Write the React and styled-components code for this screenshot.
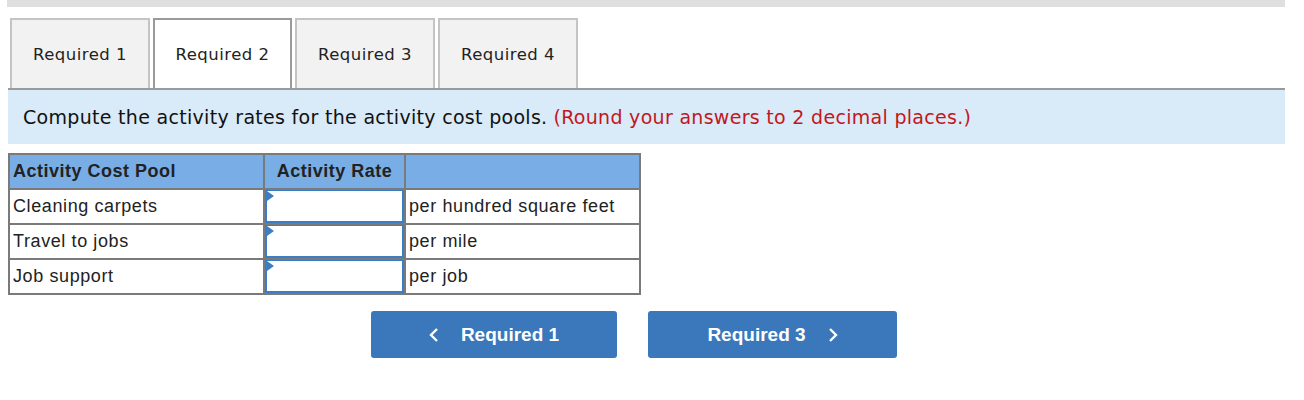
import React, {useState} from 'react'
import styled, {createGlobalStyle} from "styled-components"

const Global=createGlobalStyle`
body {
  margin: 0;
  background: #fff;
}
`
const Page=styled.div`
padding: 0 19px 0 8px;
`
const TopBar=styled.div`
height: 7px;
background-color: #dfdfdf;
margin-left: -1px;
`
const Tabs=styled.div`
display: flex;
gap: 3px;
margin-top: 11px;
padding-left: 2px;
border-bottom: 2px solid #9a9a9a;
`
const Tab=styled.button`
width: ${p=>p.active ? '139px' : '140px'};
height: 70px;
margin-bottom: ${p=>p.active ? '-2px' : '0'};
background-color: ${p=>p.active ? '#ffffff' : '#f2f2f2'};
border: 2px solid ${p=>p.active ? '#9a9a9a' : '#c4c4c4'};
border-bottom: 0;
font-family: "DejaVu Sans", Verdana, sans-serif;
font-size: 16.5px;
letter-spacing: 0.5px;
color: #222;
padding: 0;
cursor: pointer;
`
const Band=styled.div`
background-color: #d9eaf8;
height: 54px;
display: flex;
align-items: center;
padding-left: 15px;
font-family: "DejaVu Sans", Verdana, sans-serif;
font-size: 19px;
letter-spacing: 0.3px;
color: #111;
`
const Note=styled.span`
color: #c3161c;
margin-left: 6px;
`
const Table=styled.table`
margin-top: 9px;
width: 631px;
table-layout: fixed;
border-collapse: collapse;
font-family: "Liberation Sans", Arial, sans-serif;
font-size: 18px;
letter-spacing: 0.6px;
color: #222;
`
const Th=styled.th`
background-color: #78ade5;
border: 2px solid #7a7a7a;
height: 33px;
padding: 0 3px;
font-weight: bold;
letter-spacing: 0.5px;
text-align: ${p=>p.align || 'left'};
`
const Td=styled.td`
border: 2px solid #7a7a7a;
height: 31px;
padding: 0 ${p=>p.input ? '0' : '3px'};
position: relative;
`
const Cell=styled.input`
display: block;
box-sizing: border-box;
width: 100%;
height: 33px;
border: 2px solid #3a7fc6;
border-top-width: 1px;
outline: none;
font-size: 16px;
padding: 0 6px;
`
const Flag=styled.span`
position: absolute;
left: 2px;
top: 1px;
width: 0;
height: 0;
border-top: 5px solid transparent;
border-bottom: 5px solid transparent;
border-left: 7px solid #3a7fc6;
`
const Nav=styled.div`
display: flex;
gap: 31px;
margin: 16px 0 0 363px;
`
const NavButton=styled.button`
width: ${p=>p.w}px;
height: 47px;
background-color: #3a77bb;
border: none;
border-radius: 3px;
color: #fff;
font-family: "Liberation Sans", Arial, sans-serif;
font-weight: bold;
font-size: 19px;
display: flex;
align-items: center;
justify-content: center;
gap: 22px;
cursor: pointer;
`

const Chevron=({dir})=>(
  <svg width="10" height="16" viewBox="0 0 10 16">
    <path d={dir==='left' ? "M8 2 L2 8 L8 14" : "M2 2 L8 8 L2 14"} fill="none" stroke="#fff" strokeWidth="2.4"/>
  </svg>
)

const rows=[
  ['Cleaning carpets','per hundred square feet'],
  ['Travel to jobs','per mile'],
  ['Job support','per job'],
]

const App = () => {
  const [active, setActive]=useState(2);
  return (
    <Page>
      <Global/>
      <TopBar/>
      <Tabs>
        {[1,2,3,4].map(n=>(
          <Tab key={n} active={n===active} onClick={()=>setActive(n)}>Required {n}</Tab>
        ))}
      </Tabs>
      <Band>
        Compute the activity rates for the activity cost pools.
        <Note>(Round your answers to 2 decimal places.)</Note>
      </Band>
      <Table>
        <colgroup>
          <col style={{width: 255}}/>
          <col style={{width: 141}}/>
          <col style={{width: 235}}/>
        </colgroup>
        <thead>
          <tr>
            <Th>Activity Cost Pool</Th>
            <Th align="center">Activity Rate</Th>
            <Th></Th>
          </tr>
        </thead>
        <tbody>
          {rows.map(([name, unit])=>(
            <tr key={name}>
              <Td>{name}</Td>
              <Td input><Flag/><Cell type="text"/></Td>
              <Td>{unit}</Td>
            </tr>
          ))}
        </tbody>
      </Table>
      <Nav>
        <NavButton w={246}><Chevron dir="left"/>Required 1</NavButton>
        <NavButton w={249}>Required 3<Chevron dir="right"/></NavButton>
      </Nav>
    </Page>
  )
}

export default App
